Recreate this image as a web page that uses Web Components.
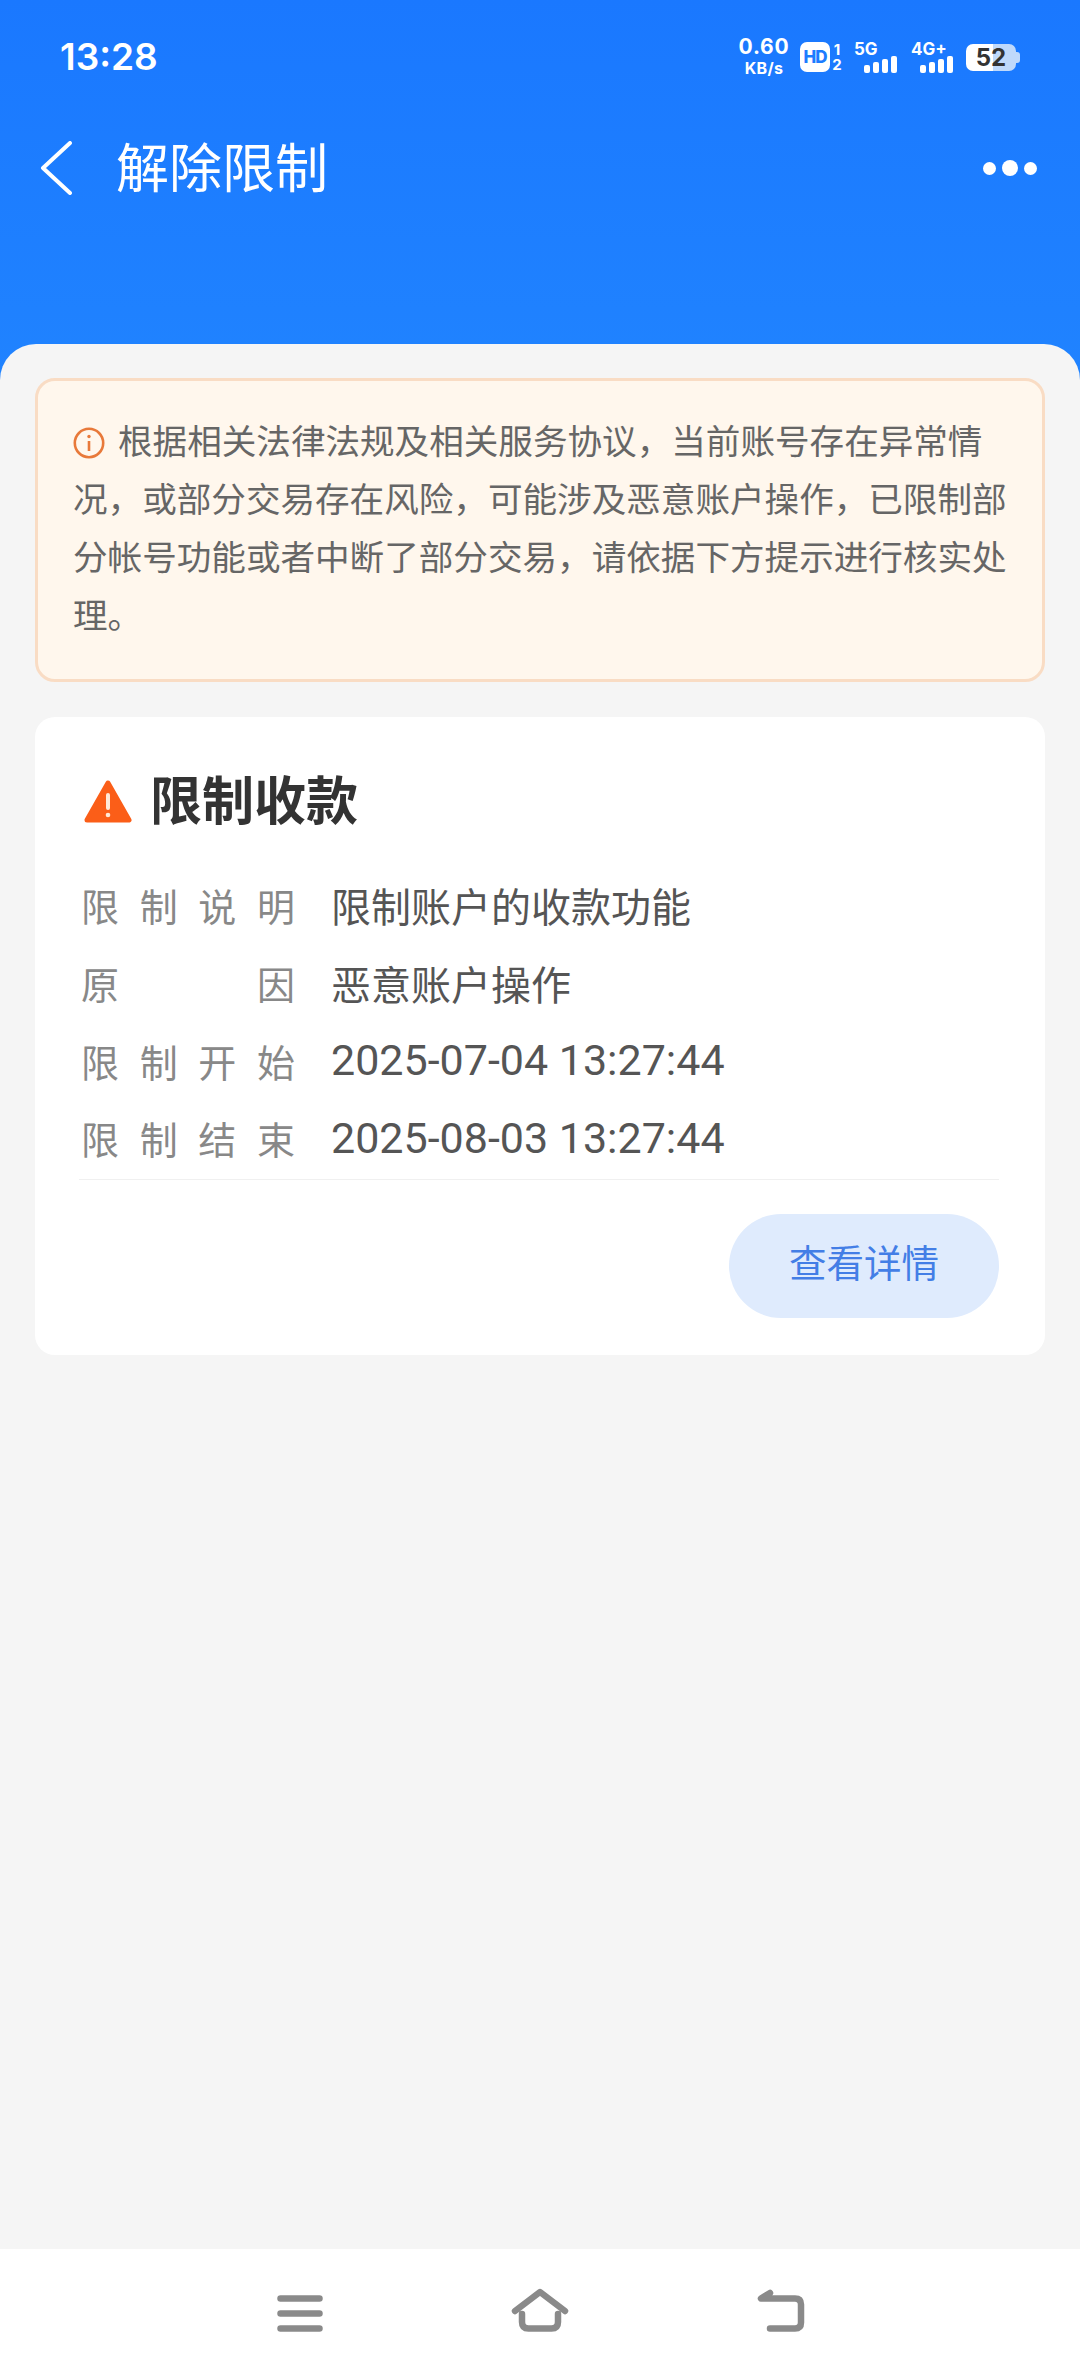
<!DOCTYPE html>
<html lang="zh">
<head>
<meta charset="utf-8">
<title>解除限制</title>
<style>
    html,body{margin:0;padding:0;height:100%}
    body{font-family:"Noto Sans CJK SC","Noto Sans",sans-serif;background:#f5f5f5}
</style>
</head>
<body>
<app-page>
    <status-bar slot="top"></status-bar>
    <title-bar slot="top">解除限制</title-bar>
    <alert-box>根据相关法律法规及相关服务协议，当前账号存在异常情况，或部分交易存在风险，可能涉及恶意账户操作，已限制部分帐号功能或者中断了部分交易，请依据下方提示进行核实处理。</alert-box>
    <limit-card heading="限制收款" action="查看详情">
        <info-row label="限制说明">限制账户的收款功能</info-row>
        <info-row label="原因">恶意账户操作</info-row>
        <info-row label="限制开始" num>2025-07-04 13:27:44</info-row>
        <info-row label="限制结束" num>2025-08-03 13:27:44</info-row>
    </limit-card>
    <nav-bar slot="bottom"></nav-bar>
</app-page>
<script>
class AppPage extends HTMLElement{
    constructor(){
        super()
        this.attachShadow({mode:'open'})
    }
    connectedCallback(){
        this.shadowRoot.innerHTML=`
            <style>
                :host{display:flex;flex-direction:column;width:1080px;height:2376px;background:#1c7cff;overflow:hidden}
                .top{height:376px;flex:none;background:linear-gradient(180deg,#1a78ff 0,#2083ff 100%)}
                .sheet{flex:1;margin-top:-32px;background:#f5f5f5;border-radius:36px 36px 0 0;padding:34px 35px 0;display:flex;flex-direction:column;gap:35px}
            </style>
            <div class="top"><slot name="top"></slot></div>
            <div class="sheet"><slot></slot></div>
            <slot name="bottom"></slot>
        `
    }
}
class StatusBar extends HTMLElement{
    constructor(){
        super()
        this.attachShadow({mode:'open'})
    }
    connectedCallback(){
        this.shadowRoot.innerHTML=`
            <style>
                :host{display:flex;align-items:center;justify-content:space-between;height:72px;padding:21px 60px 0 60px;color:#fff;font-family:Inter,"Noto Sans",sans-serif}
                .time{font-size:37px;font-weight:600;line-height:72px}
                .icons{display:flex;align-items:center;height:72px}
                .speed{display:flex;flex-direction:column;align-items:center;font-weight:700;width:50px;margin-right:11px}
                .speed span{display:block;font-size:21px;line-height:22px;letter-spacing:.8px}
                .speed span + span{font-size:16px;line-height:20px;letter-spacing:.3px}
                .hd{display:flex;align-items:center;margin-right:12px}
                .hd b{display:block;width:30px;height:30px;border-radius:7px;background:#fff;color:#1c7cff;font-size:17px;line-height:30px;text-align:center;font-weight:800;letter-spacing:-1px}
                .hd i{display:flex;flex-direction:column;align-items:center;width:10px;font-style:normal;font-size:15px;line-height:15px;font-weight:700;margin-left:2px}
                .net{display:flex;flex-direction:column;font-size:17px;font-weight:700;line-height:14px;margin-right:12px;width:45px}
                .net + .net{margin-right:10px}
                .bars{display:flex;align-items:flex-end;gap:3px;padding-left:10px;height:17px}
                .net + .net .bars{padding-left:9px}
                .bars u{display:block;width:6px;border-radius:2px;background:#fff}
                .bat{position:relative;display:block;width:50px;height:27px;border-radius:7px;margin-right:4px;background:linear-gradient(90deg,#fff 0 54%,#bfd9fb 54%);color:#333;font-size:24px;font-weight:700;line-height:27px;text-align:center}
                .bat::after{content:"";position:absolute;right:-4px;top:8px;width:4px;height:11px;border-radius:0 3px 3px 0;background:#bfd9fb}
            </style>
            <span class="time">13:28</span>
            <div class="icons">
                <div class="speed"><span>0.60</span><span>KB/s</span></div>
                <div class="hd"><b>HD</b><i><span>1</span><span>2</span></i></div>
                <div class="net"><span>5G</span><div class="bars"><u style="height:8px"></u><u style="height:11px"></u><u style="height:14px"></u><u style="height:17px"></u></div></div>
                <div class="net"><span>4G+</span><div class="bars"><u style="height:8px"></u><u style="height:11px"></u><u style="height:14px"></u><u style="height:17px"></u></div></div>
                <span class="bat">52</span>
            </div>
        `
    }
}
class TitleBar extends HTMLElement{
    constructor(){
        super()
        this.attachShadow({mode:'open'})
    }
    connectedCallback(){
        this.shadowRoot.innerHTML=`
            <style>
                :host{display:flex;align-items:center;height:72px;margin-top:39px;color:#fff}
                svg.back{margin-left:40px;flex:none}
                .name{margin-left:44px;font-size:53px;line-height:66px;padding-bottom:6px;flex:1}
                .more{display:flex;align-items:center;gap:6px;margin-right:43px}
                .more i{display:block;width:13px;height:13px;border-radius:50%;background:#fff}
                .more i:nth-child(2){width:16px;height:16px}
            </style>
            <svg class="back" width="32" height="54" viewBox="0 0 32 54"><path d="M30 2 3 27l27 25" fill="none" stroke="#fff" stroke-width="4" stroke-linecap="round" stroke-linejoin="round"/></svg>
            <span class="name"><slot></slot></span>
            <div class="more"><i></i><i></i><i></i></div>
        `
    }
}
class AlertBox extends HTMLElement{
    constructor(){
        super()
        this.attachShadow({mode:'open'})
    }
    connectedCallback(){
        this.shadowRoot.innerHTML=`
            <style>
                :host{display:block;box-sizing:border-box;width:1010px;height:304px;background:#fff7ed;border:3px solid #f9dcc4;border-radius:20px;padding:29px 34px 0 35px;color:#666;font-size:34.6px;line-height:58px}
                svg{vertical-align:-5px;margin-right:13px}
            </style>
            <svg width="32" height="32" viewBox="0 0 32 32"><circle cx="16" cy="16" r="14.2" fill="none" stroke="#e8793a" stroke-width="2.6"/><path d="M16 14v10" stroke="#e8793a" stroke-width="2.6"/><circle cx="16" cy="9.5" r="1.7" fill="#e8793a"/></svg><slot></slot>
        `
    }
}
class LimitCard extends HTMLElement{
    constructor(){
        super()
        this.attachShadow({mode:'open'})
    }
    connectedCallback(){
        const heading=this.getAttribute('heading')
        const action=this.getAttribute('action')
        this.shadowRoot.innerHTML=`
            <style>
                :host{display:block;box-sizing:border-box;width:1010px;height:638px;background:#fff;border-radius:20px;padding:0 46px 0 48px}
                .head{display:flex;align-items:center;height:74px;padding-top:44px;margin-bottom:33px;gap:17px;color:#333;font-size:52px;font-weight:700}
                .head span{line-height:74px}
                .head svg{margin-top:8px}
                .rows{display:flex;flex-direction:column;margin-left:-4px;padding-left:2px;border-bottom:1px solid #f0f0f0}
                .foot{display:flex;justify-content:flex-end;padding-top:34px}
                .btn{display:block;width:270px;height:104px;border-radius:52px;background:#dfebfd;color:#437ee6;font-size:37.5px;line-height:94px;text-align:center}
            </style>
            <div class="head">
                <svg width="50" height="46" viewBox="0 0 50 46"><path d="M25 4 46 41H4Z" fill="#fb5e18" stroke="#fb5e18" stroke-width="5" stroke-linejoin="round"/><path d="M25 16v13" stroke="#ffe9d8" stroke-width="4" stroke-linecap="round"/><circle cx="25" cy="36" r="2.3" fill="#ffe9d8"/></svg>
                <span>${heading}</span>
            </div>
            <div class="rows"><slot></slot></div>
            <div class="foot"><span class="btn">${action}</span></div>
        `
    }
}
class InfoRow extends HTMLElement{
    constructor(){
        super()
        this.attachShadow({mode:'open'})
    }
    connectedCallback(){
        const label=this.getAttribute('label')
        const cells=label.split('').map(c=>`<span>${c}</span>`).join('')
        this.shadowRoot.innerHTML=`
            <style>
                :host{display:flex;align-items:center;box-sizing:border-box;height:77.7px;padding-bottom:4px;font-size:40px}
                :host([num]) .value{font-size:43px}
                .label{display:flex;justify-content:space-between;width:214px;margin-right:36px;color:#888;flex:none;font-size:38px}
                .value{color:#555;font-family:Roboto,"Noto Sans CJK SC",sans-serif}
            </style>
            <span class="label">${cells}</span>
            <span class="value"><slot></slot></span>
        `
    }
}
class NavBar extends HTMLElement{
    constructor(){
        super()
        this.attachShadow({mode:'open'})
    }
    connectedCallback(){
        this.shadowRoot.innerHTML=`
            <style>
                :host{display:grid;grid-template-columns:repeat(3,241px);justify-content:center;justify-items:center;align-items:center;height:127px;flex:none;background:#fff;padding-left:2px;box-sizing:border-box}
                svg{display:block;fill:none;stroke:#8a8a8a;stroke-width:6.5;stroke-linecap:round;stroke-linejoin:round}
            </style>
            <svg width="50" height="50" viewBox="0 0 50 50"><path d="M5.5 10.500h39M5.500 25.500h39M5.500 40.500h39"/></svg>
            <svg width="60" height="50" viewBox="0 0 60 50"><path d="M4 23 29 4l25 19M11 26v8q0 6.500 6.500 6.500h23q6.500 0 6.500-6.500v-8"/></svg>
            <svg width="50" height="50" viewBox="0 0 50 50"><path d="M13 5 4 10.500h34q6 0 6 6v18q0 6-6 6H13"/></svg>
        `
    }
}
window.customElements.define('app-page',AppPage)
window.customElements.define('status-bar',StatusBar)
window.customElements.define('title-bar',TitleBar)
window.customElements.define('alert-box',AlertBox)
window.customElements.define('limit-card',LimitCard)
window.customElements.define('info-row',InfoRow)
window.customElements.define('nav-bar',NavBar)
</script>
</body>
</html>
